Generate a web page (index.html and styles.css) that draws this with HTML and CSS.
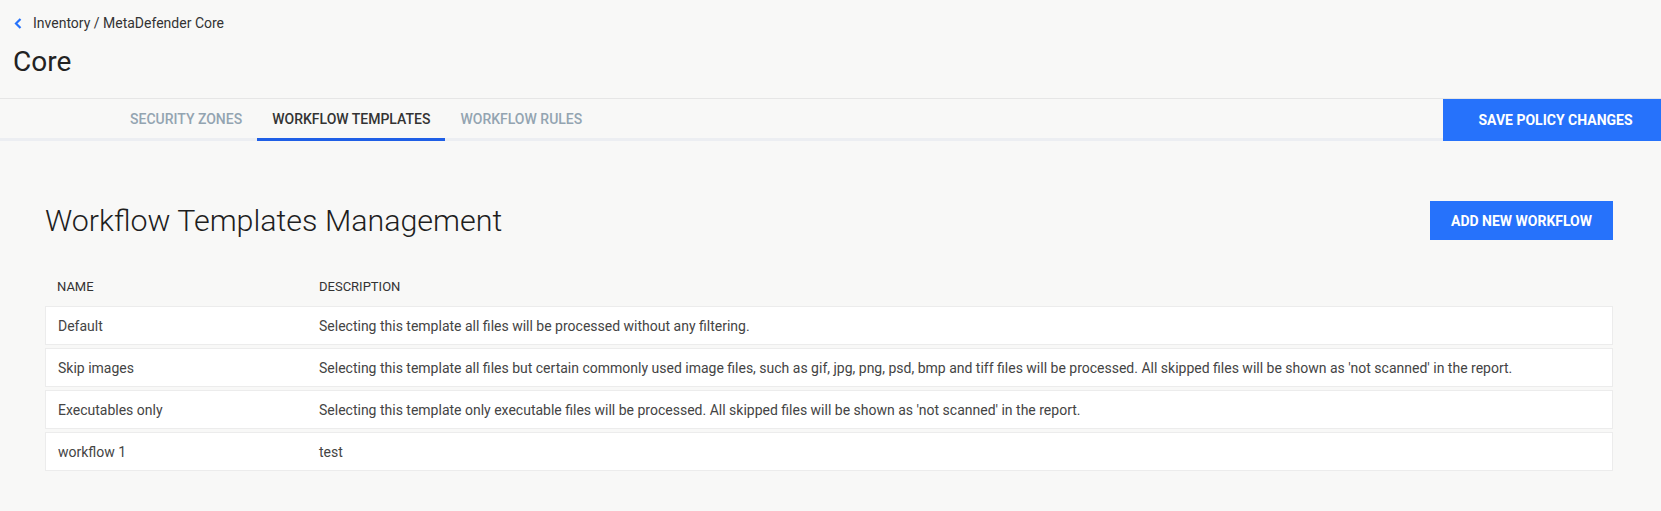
FILE: index.html
```html
<!DOCTYPE html>
<html lang="en">
<head>
<meta charset="utf-8">
<title>Core</title>
<link rel="stylesheet" href="styles.css">
</head>
<body>
<header class="page-header">
  <div class="breadcrumb">
    <svg class="back-icon" width="8" height="11" viewBox="0 0 8 11"><path d="M6.5 1 L2 5.5 L6.5 10" fill="none" stroke="#2672fb" stroke-width="2.2"/></svg>
    <span class="crumb-text">Inventory / MetaDefender Core</span>
  </div>
  <h1 class="page-title">Core</h1>
</header>
<nav class="tabbar">
  <div class="tabs">
    <div class="tab">SECURITY ZONES</div>
    <div class="tab active">WORKFLOW TEMPLATES</div>
    <div class="tab">WORKFLOW RULES</div>
  </div>
  <button class="save-btn">SAVE POLICY CHANGES</button>
</nav>
<main class="content">
  <div class="content-head">
    <h2 class="section-title">Workflow Templates Management</h2>
    <button class="add-btn">ADD NEW WORKFLOW</button>
  </div>
  <div class="table">
    <div class="thead">
      <div class="th">NAME</div>
      <div class="th">DESCRIPTION</div>
    </div>
    <div class="row">
      <div class="cell">Default</div>
      <div class="cell">Selecting this template all files will be processed without any filtering.</div>
    </div>
    <div class="row">
      <div class="cell">Skip images</div>
      <div class="cell">Selecting this template all files but certain commonly used image files, such as gif, jpg, png, psd, bmp and tiff files will be processed. All skipped files will be shown as 'not scanned' in the report.</div>
    </div>
    <div class="row">
      <div class="cell">Executables only</div>
      <div class="cell">Selecting this template only executable files will be processed. All skipped files will be shown as 'not scanned' in the report.</div>
    </div>
    <div class="row">
      <div class="cell">workflow 1</div>
      <div class="cell">test</div>
    </div>
  </div>
</main>
</body>
</html>
```

FILE: styles.css
```css
* { box-sizing: border-box; }
html, body { margin: 0; padding: 0; }
body {
  background: #f8f8f7;
  font-family: Roboto, "Liberation Sans", Arial, sans-serif;
  color: #333;
  width: 1661px;
  height: 511px;
  overflow: hidden;
}
.page-header {
  height: 99px;
  border-bottom: 1px solid #e6e6e6;
  padding: 13px 0 0 13px;
}
.breadcrumb {
  display: flex;
  align-items: center;
  height: 20px;
  font-size: 14px;
  color: #333;
}
.back-icon { margin-left: 1px; margin-right: 11px; }
.page-title {
  margin: 12px 0 0 0;
  font-size: 28px;
  line-height: 34px;
  font-weight: 400;
  color: #222;
}
.tabbar {
  display: flex;
  height: 42px;
}
.tabs {
  flex: 1;
  display: flex;
  padding-left: 115px;
  border-bottom: 3px solid #eceef2;
}
.tab {
  position: relative;
  padding: 0 15px;
  display: flex;
  align-items: center;
  font-size: 14px;
  font-weight: 500;
  color: #93a4b1;
}
.tab.active { color: #333; }
.tab.active::after {
  content: "";
  position: absolute;
  left: 0; right: 0; bottom: -3px;
  height: 3px;
  background: #1f5fe6;
}
.save-btn {
  width: 218px;
  border: none;
  margin: 0;
  background: #2672fb;
  color: #fff;
  font-family: inherit;
  font-size: 14px;
  font-weight: 700;
  padding: 0 0 0 7px;
}
.content {
  padding: 60px 48px 0 45px;
}
.content-head {
  display: flex;
  align-items: center;
  justify-content: space-between;
  height: 39px;
}
.section-title {
  margin: 0;
  font-size: 30.4px;
  font-weight: 300;
  color: #1e1e1e;
}
.add-btn {
  width: 183px;
  height: 39px;
  border: none;
  background: #2672fb;
  color: #fff;
  font-family: inherit;
  font-size: 14px;
  font-weight: 700;
  padding: 0;
}
.table { margin-top: 29px; display: flex; flex-direction: column; gap: 3px; }
.thead {
  display: grid;
  grid-template-columns: 262px 1fr;
  height: 34px;
  align-items: center;
  padding-left: 12px;
  font-size: 13px;
  color: #333;
}
.row {
  display: grid;
  grid-template-columns: 261px 1fr;
  height: 39px;
  align-items: center;
  padding-left: 12px;
  background: #fff;
  border: 1px solid #ececec;
  font-size: 14px;
  color: #444;
}
```
